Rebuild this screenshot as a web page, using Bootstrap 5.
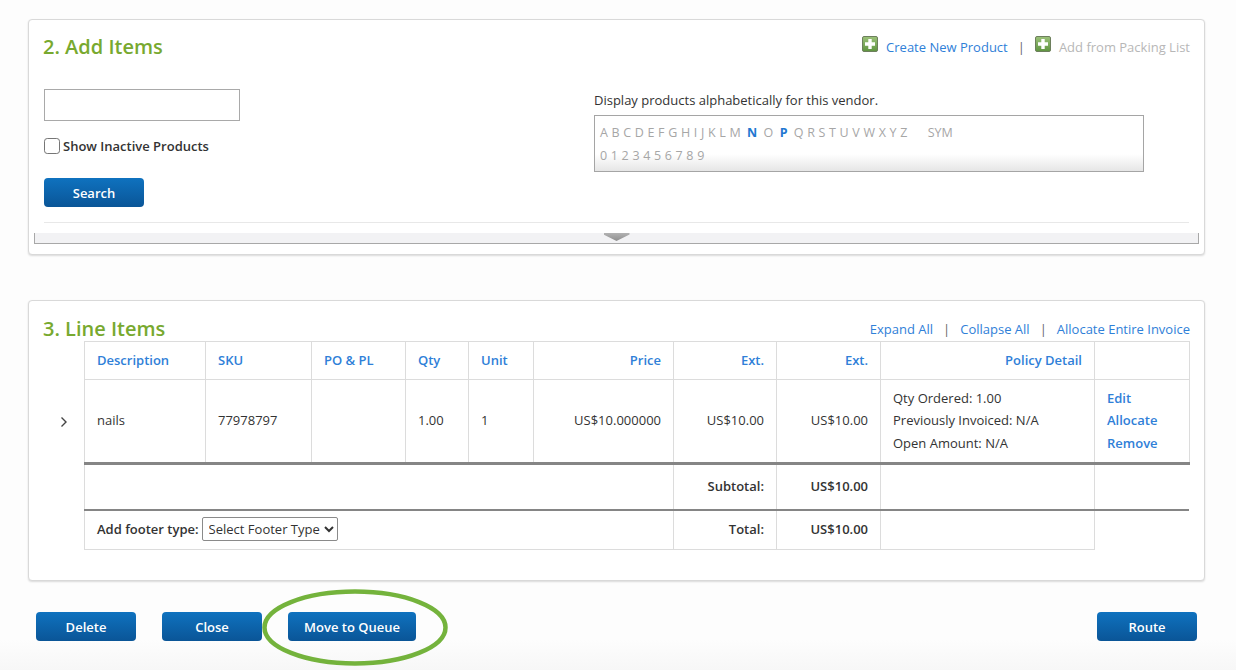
<!DOCTYPE html>
<html lang="en">
<head>
<meta charset="utf-8">
<title>Invoice</title>
<link href="https://cdn.jsdelivr.net/npm/bootstrap@5.3.0/dist/css/bootstrap.min.css" rel="stylesheet">
<style>
html,body{height:670px;overflow:hidden}
body{background:#fdfdfd;font-family:"Open Sans","Noto Sans",sans-serif;font-size:13px;color:#333;position:relative}
a{text-decoration:none;color:#2f80d8}
.page-wrap{padding:19px 31px 0 28px;height:670px;background:linear-gradient(#fdfdfd 640px,#f7f7f7 670px)}
.panel-box{border:1px solid #d9d9d9;border-radius:4px;box-shadow:0 1px 2px rgba(0,0,0,.14);background:#fff}
.panel-one{height:236px;padding:0 5px 10px;margin-bottom:45px}
.panel-two{height:281px;padding:0 14px}
.panel-top{padding:12px 9px 0}
.sec-title{color:#78a92f;font-size:20px;font-weight:600;line-height:30px;margin:0}
.top-links{padding-top:1px;line-height:24px;height:28px}
.add-icon{width:16px;height:16px;margin-top:-6px}
.add-icon-gap{margin-right:8px}
.muted-link{color:#b7b7b7}
.sep{color:#666}
.top-links .sep{margin:0 10px}
.top-links .add-second{margin-right:8px}
.search-row{padding:0 9px 0 10px;margin-top:27px;height:118px}
.left-search{width:550px}
.search-field{display:block;width:196px;height:32px;border:1px solid #a9a9a9;background:#fff;border-radius:0;padding:0 6px}
.inactive-label{font-weight:600;font-size:13px;margin-top:15px;height:20px;line-height:20px;color:#333}
.inactive-check{width:16px;height:16px;margin:0 3px 0 0;border:1px solid #767676;border-radius:3px}
.blue-btn{display:flex;align-items:center;justify-content:center;height:29px;width:100px;padding:2px 0 0;border:0;border-radius:4px;color:#fff;font-size:13px;font-weight:600;background:linear-gradient(#0f72bf,#0a5597)}
.blue-btn:hover{color:#fff;background:linear-gradient(#0f72bf,#0a5597)}
.search-btn{margin-top:22px}
.alpha-col{padding-top:2px}
.alpha-note{line-height:18px;font-size:13px;color:#333;margin-bottom:6px}
.alpha-box{width:550px;height:57px;border:1px solid #a5a5a5;padding:5px 5px 0;color:#a6a6a6;font-size:12.5px;line-height:23px;background:linear-gradient(#fff 30px,#fff 38px,#e4e4e4 56px)}
.alpha-box span{letter-spacing:.2px}
.alpha-box b{color:#1f78d1;font-weight:700;margin:0 3px}
.alpha-box .sym{letter-spacing:0;margin-left:17px}
.panel-rule{height:1px;background:#e8e8e8;margin:15px 10px 10px}
.drawer-band{height:11px;background:#f2f2f4;border:1px solid #a8a8a8;border-top:0;display:flex;justify-content:center}
.drawer-arrow{width:26px;height:8px;background:linear-gradient(#b2b2b2,#8f8f8f);clip-path:polygon(0 0,100% 0,100% 20%,50% 100%,0 20%)}
.line-head{height:40px;align-items:flex-end}
.line-head .sec-title{line-height:28px;margin-bottom:-2px}
.line-links{line-height:22px;padding-bottom:1px}
.line-links .sep{margin:0 10px}
.lines{table-layout:fixed;width:1146px;border-collapse:collapse;margin:0}
.lines td,.lines th{border:1px solid #dcdcdc;padding:0 11.5px 0 12.5px;vertical-align:middle;font-size:13px;background:transparent;box-shadow:none;color:#333}
.lines th{font-weight:600;color:#2f80d8;height:38px}
.lines td.chev{border:0;padding:0 0 0 2px;text-align:center}
.lines th.blank-corner{border:0;border-right:1px solid #dcdcdc}
.lines .item-row td{height:84px;line-height:22.6px;padding-bottom:1px}
.lines .sum-row td{height:46px;font-weight:600;border-top:3px solid #858585}
.lines .total-row td{height:40px;font-weight:600;border-top:2px solid #858585}
.lines td.no-right{border-right:0}
.lines .total-row td.open-cell{border-bottom:0;border-right:0;border-left:1px solid #dcdcdc}
.lines .chev-side{border:0!important}
.row-links a{font-weight:600;display:block}
.footer-wrap{gap:3px}
.footer-select{font-size:13px;height:24px;width:136px;border:1px solid #8a8a8a;border-radius:2px;background:#fff;color:#333;padding:0 1px 0 2px;font-family:inherit;font-weight:400;margin-top:-1px}
.action-row{padding:31px 8px 0}
.move-btn{width:128px}
.gap-btns{gap:26px}
.queue-ring{position:absolute;left:262px;top:589px;width:186px;height:77px}
</style>
</head>
<body>
<div class="page-wrap">
  <section class="panel-box panel-one">
    <div class="panel-top d-flex justify-content-between">
      <h2 class="sec-title">2. Add Items</h2>
      <div class="top-links d-flex align-items-center">
        <svg class="add-icon add-icon-gap" viewBox="0 0 16 16"><defs><linearGradient id="g1" x1="0" y1="0" x2="0" y2="1"><stop offset="0" stop-color="#9cc27a"/><stop offset="1" stop-color="#5f9440"/></linearGradient></defs><rect x=".5" y=".5" width="15" height="15" rx="1.5" fill="url(#g1)" stroke="#6d7f5d"/><path d="M6.3 3h3.4v3.3H13v3.4H9.7V13H6.3V9.7H3V6.3h3.3z" fill="#fff"/></svg>
        <a href="#">Create New Product</a>
        <span class="sep">|</span>
        <svg class="add-icon add-second" viewBox="0 0 16 16"><rect x=".5" y=".5" width="15" height="15" rx="1.5" fill="url(#g1)" stroke="#6d7f5d"/><path d="M6.3 3h3.4v3.3H13v3.4H9.7V13H6.3V9.7H3V6.3h3.3z" fill="#fff"/></svg>
        <span class="muted-link">Add from Packing List</span>
      </div>
    </div>
    <div class="search-row d-flex">
      <div class="left-search">
        <input class="search-field" type="text" aria-label="Search products">
        <div class="inactive-label d-flex align-items-center"><input class="form-check-input inactive-check" type="checkbox" id="inactive"><label for="inactive">Show Inactive Products</label></div>
        <button class="btn blue-btn search-btn" type="button">Search</button>
      </div>
      <div class="alpha-col">
        <div class="alpha-note">Display products alphabetically for this vendor.</div>
        <div class="alpha-box">
          <div><span>A B C D E F G H I J K L M</span> <b>N</b> <span>O</span> <b>P</b> <span>Q R S T U V W X Y Z</span> <span class="sym">SYM</span></div>
          <div><span>0 1 2 3 4 5 6 7 8 9</span></div>
        </div>
      </div>
    </div>
    <div class="panel-rule"></div>
    <div class="drawer-band"><div class="drawer-arrow"></div></div>
  </section>

  <section class="panel-box panel-two">
    <div class="line-head d-flex justify-content-between">
      <h2 class="sec-title">3. Line Items</h2>
      <div class="line-links"><a href="#">Expand All</a><span class="sep">|</span><a href="#">Collapse All</a><span class="sep">|</span><a href="#">Allocate Entire Invoice</a></div>
    </div>
    <table class="table lines">
      <colgroup><col style="width:41px"><col style="width:121px"><col style="width:106px"><col style="width:94px"><col style="width:63px"><col style="width:65px"><col style="width:140px"><col style="width:103px"><col style="width:104px"><col style="width:214px"><col style="width:95px"></colgroup>
      <thead>
        <tr>
          <th class="blank-corner"></th><th>Description</th><th>SKU</th><th>PO &amp; PL</th><th>Qty</th><th>Unit</th>
          <th class="text-end">Price</th><th class="text-end">Ext.</th><th class="text-end">Ext.</th><th class="text-end">Policy Detail</th><th></th>
        </tr>
      </thead>
      <tbody>
        <tr class="item-row">
          <td class="chev"><svg width="8" height="12" viewBox="0 0 8 12"><path d="M1.5 1.5 6 6l-4.5 4.5" fill="none" stroke="#444" stroke-width="1.4"/></svg></td>
          <td>nails</td><td>77978797</td><td></td><td>1.00</td><td>1</td>
          <td class="text-end">US$10.000000</td><td class="text-end">US$10.00</td><td class="text-end">US$10.00</td>
          <td>Qty Ordered: 1.00<br>Previously Invoiced: N/A<br>Open Amount: N/A</td>
          <td class="row-links"><a href="#">Edit</a><a href="#">Allocate</a><a href="#">Remove</a></td>
        </tr>
        <tr class="sum-row">
          <td class="chev-side"></td><td colspan="6"></td>
          <td class="text-end">Subtotal:</td><td class="text-end">US$10.00</td><td></td><td class="no-right"></td>
        </tr>
        <tr class="total-row">
          <td class="chev-side"></td>
          <td colspan="6"><div class="d-flex align-items-center footer-wrap"><span>Add footer type:</span><select class="footer-select" aria-label="Footer type"><option>Select Footer Type</option></select></div></td>
          <td class="text-end">Total:</td><td class="text-end">US$10.00</td><td></td><td class="open-cell"></td>
        </tr>
      </tbody>
    </table>
  </section>

  <div class="action-row d-flex justify-content-between">
    <div class="d-flex gap-btns">
      <button class="btn blue-btn" type="button">Delete</button>
      <button class="btn blue-btn" type="button">Close</button>
      <button class="btn blue-btn move-btn" type="button">Move to Queue</button>
    </div>
    <button class="btn blue-btn" type="button">Route</button>
  </div>
</div>
<svg class="queue-ring" viewBox="0 0 186 77"><ellipse cx="93" cy="38.5" rx="90.5" ry="36" fill="none" stroke="#74b33c" stroke-width="4.5"/></svg>
</body>
</html>
